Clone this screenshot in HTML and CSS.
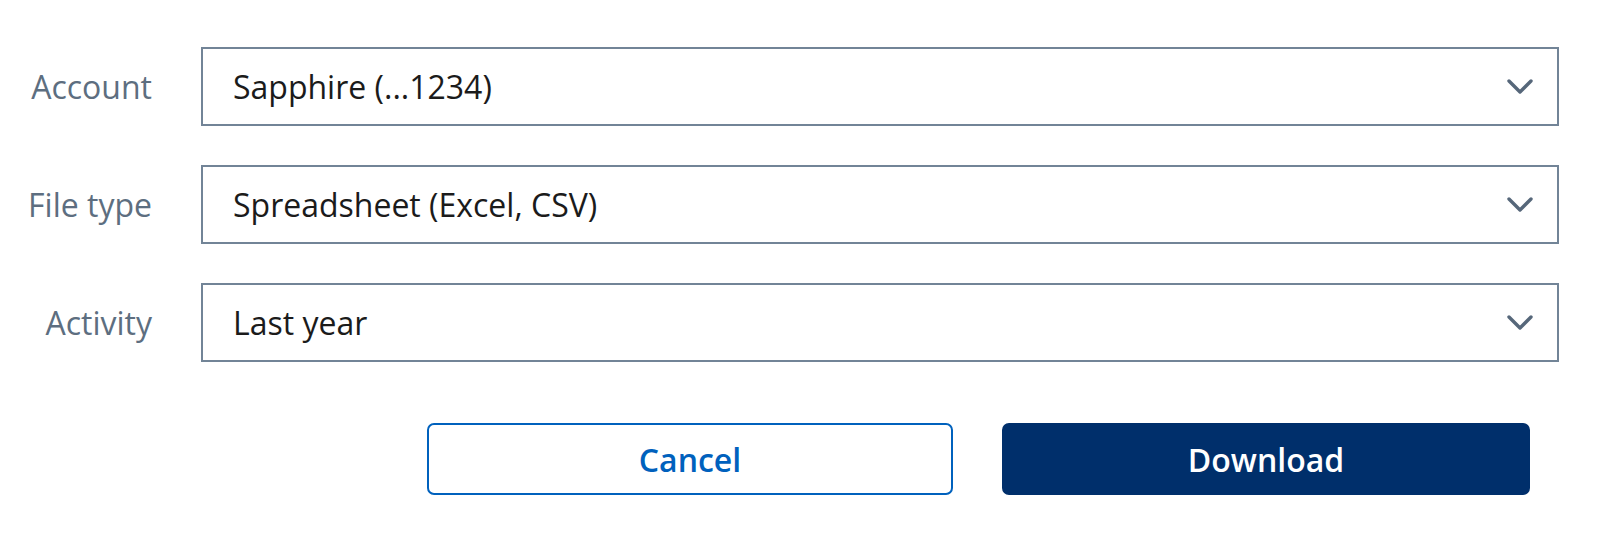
FILE: index.html
```html
<!DOCTYPE html>
<html lang="en">
<head>
<meta charset="utf-8">
<title>Download activity</title>
<link rel="stylesheet" href="styles.css">
</head>
<body>
<form class="form">
  <div class="row">
    <label class="label">Account</label>
    <div class="select"><span class="value">Sapphire (...1234)</span>
      <svg class="chev" viewBox="0 0 26 16" width="26" height="16"><path d="M2 2 L13 13 L24 2" fill="none" stroke="currentColor" stroke-width="3.4" stroke-linecap="round" stroke-linejoin="round"/></svg>
    </div>
  </div>
  <div class="row">
    <label class="label">File type</label>
    <div class="select"><span class="value">Spreadsheet (Excel, CSV)</span>
      <svg class="chev" viewBox="0 0 26 16" width="26" height="16"><path d="M2 2 L13 13 L24 2" fill="none" stroke="currentColor" stroke-width="3.4" stroke-linecap="round" stroke-linejoin="round"/></svg>
    </div>
  </div>
  <div class="row">
    <label class="label">Activity</label>
    <div class="select"><span class="value">Last year</span>
      <svg class="chev" viewBox="0 0 26 16" width="26" height="16"><path d="M2 2 L13 13 L24 2" fill="none" stroke="currentColor" stroke-width="3.4" stroke-linecap="round" stroke-linejoin="round"/></svg>
    </div>
  </div>
  <div class="actions">
    <button type="button" class="btn btn-secondary">Cancel</button>
    <button type="button" class="btn btn-primary">Download</button>
  </div>
</form>
</body>
</html>
```
FILE: styles.css
```css
* { box-sizing: border-box; }
html, body { margin: 0; background: #ffffff; }
body {
  font-family: "Open Sans", "Noto Sans", sans-serif;
  width: 1612px;
  height: 540px;
  overflow: hidden;
}
.form {
  padding-top: 47px;
  display: flex;
  flex-direction: column;
  gap: 39px;
}
.row {
  display: grid;
  grid-template-columns: 152px 1358px;
  column-gap: 49px;
  align-items: center;
}
.label {
  text-align: right;
  font-size: 32px;
  color: #5d6e80;
  line-height: 1;
}
.select {
  height: 79px;
  border: 2px solid #728497;
  display: flex;
  align-items: center;
  justify-content: space-between;
  padding: 0 24px 0 30px;
  color: #56677a;
}
.value {
  font-size: 32px;
  color: #1b1b1b;
  line-height: 1;
}
.chev { display: block; }
.actions {
  display: flex;
  justify-content: flex-end;
  gap: 49px;
  width: 1530px;
  margin-top: 22px;
}
.btn {
  font-family: "Open Sans", "Noto Sans", sans-serif;
  font-size: 32px;
  font-weight: 600;
  height: 72px;
  border-radius: 7px;
  cursor: pointer;
}
.btn-secondary {
  width: 526px;
  background: #ffffff;
  border: 2px solid #0061bd;
  color: #0061bd;
}
.btn-primary {
  width: 528px;
  background: #002f6b;
  border: 2px solid #002f6b;
  color: #ffffff;
}
```
